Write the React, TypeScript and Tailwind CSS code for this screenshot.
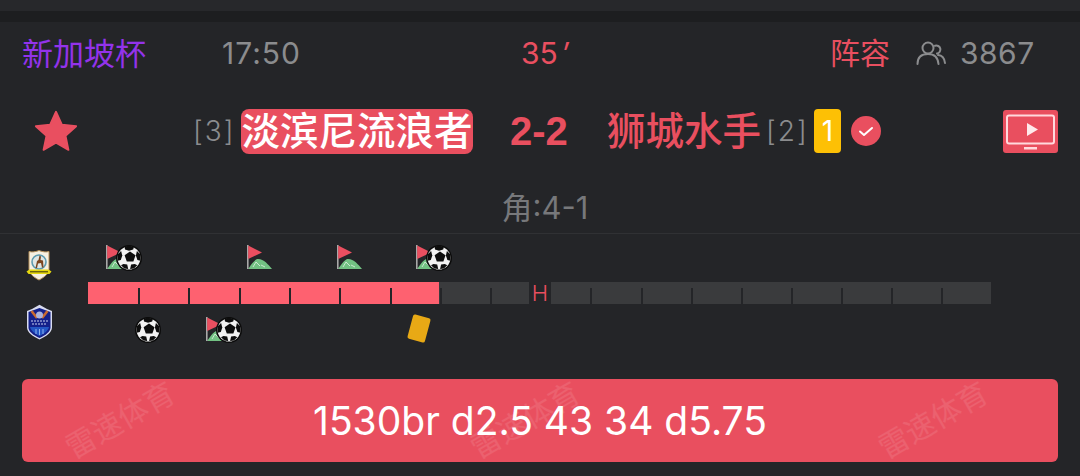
import React from "react";

const FONT = "font-['Inter','Noto_Sans_CJK_SC',sans-serif]";

function Ball({ className }: { className: string }) {
  return (
    <svg viewBox="0 0 26 26" className={className}>
      <circle cx="13" cy="13" r="13" fill="#0b0b0b" />
      <circle cx="13" cy="13" r="11.500" fill="#f2f2f2" />
      <path d="M14 6.500l5.500 3.800-2.100 6.300h-6.600l-2.200-6.300z" fill="#0d0d0d" />
      <path d="M8.500 1.600l4.500-.8 5 1-.8 2.600-4.200 1.400-4-1.400z" fill="#0d0d0d" />
      <path d="M1.500 9.500l3.600-3.400 1.200 4.400-1.500 4.500-3.200 .8z" fill="#0d0d0d" />
      <path d="M24.500 9.500l-3.600-3.400-1 4.400 1.500 4.500 3.100 .8z" fill="#0d0d0d" />
      <path d="M7.500 19l3.700 .5 1 4.500-3.800-.5-3.400-3.300z" fill="#0d0d0d" />
      <path d="M18.800 19l-3.700 .5-1 4.500 3.800-.5 3.400-3.300z" fill="#0d0d0d" />
    </svg>
  );
}

function Corner({ className }: { className: string }) {
  return (
    <svg viewBox="0 0 25 24" className={className}>
      <path d="M1 24c2-2 4-7 9-10 6-1 11 5 15 10z" fill="#72c283" />
      <path d="M9 17l-3 5M9 17l4 4M14 20l4 2" stroke="#dff3e3" strokeWidth="0.8" fill="none" />
      <rect x="0" y="0" width="1.600" height="24" fill="#a9a9a9" />
      <path d="M1.200 0.500L15 7.500 1.200 14z" fill="#ea4f60" />
    </svg>
  );
}

function CornerBall({ className }: { className: string }) {
  return (
    <div className={`absolute flex h-[25px] w-[36px] ${className}`}>
      <Corner className="h-[24px] w-[25px]" />
      <Ball className="-ml-[15px] h-[26px] w-[26px]" />
    </div>
  );
}

function HomeCrest() {
  return (
    <svg viewBox="0 0 26 31" className="h-[31px] w-[26px]">
      <path d="M3 1.500c3 .8 6 .5 10-1 4 1.500 7 1.800 10 1v18c0 4-5 8-10 10.500-5-2.500-10-6.500-10-10.500z" fill="#f6f0e2" stroke="#b7925a" strokeWidth="1" />
      <circle cx="13" cy="12" r="7" fill="#dfe6e4" stroke="#5d9bb0" strokeWidth="1.600" />
      <path d="M9.500 18l1.500-7 1.500-1 1-4.500 1.500 1-.5 3.500 2.500 .5 .5 7-1.500 0-1-4.500-3 .5-1 4.500z" fill="#7a4520" />
      <path d="M0.500 21.500l3-2h19l3 2-2 2.500H2.500z" fill="#e6d80f" />
      <path d="M4 21.800h18" stroke="#3a3510" strokeWidth="1" />
    </svg>
  );
}

function AwayCrest() {
  return (
    <svg viewBox="0 0 27 36" className="h-[36px] w-[27px]">
      <path d="M1 7l5-2L13.500 .8 21 5l5 2v16.500c0 5-6 9-12.500 12C7 32.500 1 28.500 1 23.500z" fill="#d9dcf0" />
      <path d="M2.500 8l11-4 11 4v15.500c0 4-5 8-11 10.500-6-2.500-11-6.500-11-10.500z" fill="#14208a" />
      <path d="M5.500 7l5.500 7M21.500 7l-5.500 7" stroke="#c9692f" strokeWidth="2.600" />
      <circle cx="13.500" cy="11" r="3.500" fill="#aab2dc" />
      <path d="M5 17h17M6 20h15" stroke="#c9cff0" strokeWidth="1.200" strokeDasharray="2 1" />
      <path d="M4 23h19c-1 4-5 7-9.500 9C9 30 5 27 4 23z" fill="#2456c4" />
      <path d="M10 25v5M13.500 25v6M17 25v5" stroke="#8fb2ee" strokeWidth="1" />
    </svg>
  );
}

function PeopleIcon() {
  return (
    <svg viewBox="0 0 30 26" className="h-[26px] w-[30px]" fill="none" stroke="#8b8c8e" strokeWidth="2" strokeLinecap="round">
      <circle cx="12" cy="8" r="5.500" />
      <path d="M1.500 24c0-6 3.500-10 10.500-10s10 4 10.500 10" />
      <path d="M19 5.800a4 4 0 1 1 2 7.700" />
      <path d="M22 15c4 .3 6.500 3.500 7 8" />
    </svg>
  );
}

// one stretch of the match bar, a notch on the right of each cell but the last
function Stretch({ widths, tone }: { widths: string[]; tone: string }) {
  return (
    <>
      {widths.map((w, i) => (
        <div key={i} className={`flex h-full items-end justify-end ${w} ${tone}`}>
          {i < widths.length - 1 && <div className="h-4 w-[2px] bg-[#242528]" />}
        </div>
      ))}
    </>
  );
}

const playedCells = ["w-[52px]", "w-[50px]", "w-[51px]", "w-[50px]", "w-[50px]", "w-[51px]", "w-[47px]"];
const firstHalfRest = ["w-[3px]", "w-[50px]", "w-[37px]"];
const secondHalf = ["w-[41px]", "w-[51px]", "w-[50px]", "w-[50px]", "w-[50px]", "w-[50px]", "w-[50px]", "w-[50px]", "w-[48px]"];

const watermarks = ["left-[38px]", "left-[443px]", "left-[851px]"];

export default function App() {
  return (
    <div className={`h-[476px] w-[1080px] overflow-hidden bg-[#242528] ${FONT}`}>
      <div className="h-[11px] bg-[#27282b]" />
      <div className="h-[11px] bg-[#1d1e20]" />

      <div className="flex h-[62px] items-center pl-[22px] leading-none">
        <div className="w-[200px] text-[31px] text-[#9333ea]">新加坡杯</div>
        <div className="w-[299px] text-[30px] tracking-[1px] text-[#8b8c8e]">17:50</div>
        <div className="w-[309px] text-[30px] text-[#e94f60]">35<span className="ml-1 italic">′</span></div>
        <div className="w-[86px] text-[30px] text-[#e94f60]">阵容</div>
        <PeopleIcon />
        <div className="ml-[14px] text-[30px] tracking-[0.5px] text-[#8b8c8e]">3867</div>
      </div>

      <div className="flex h-[94px] items-center pl-[34px]">
        <svg viewBox="0 0 24 24" className="h-[44px] w-[44px] text-[#e94f60]">
          <path fill="currentColor" stroke="currentColor" strokeWidth="1" strokeLinejoin="round" d="M12 1.500l3.200 7 7.800.9-5.800 5.200 1.600 7.700-6.800-3.900-6.800 3.900 1.600-7.700L1 9.400l7.800-.9z" />
        </svg>
        <div className="ml-[115px] w-[48px] text-[28px] font-light tracking-[2px] text-[#8b8c8e]">[3]</div>
        <div className="flex h-[45px] w-[232px] items-center justify-center rounded-[8px] bg-[#e94f5f] pt-[1px] text-[38.500px] font-medium text-white">淡滨尼流浪者</div>
        <div className="ml-[37px] w-[97px] font-['Liberation_Sans',sans-serif] text-[40px] font-bold text-[#e94f5f]">2-2</div>
        <div className="w-[159px] pt-[1px] text-[38.500px] font-medium text-[#e94f5f]">狮城水手</div>
        <div className="w-[48px] text-[28px] font-light tracking-[2px] text-[#8b8c8e]">[2]</div>
        <div className="flex h-[44px] w-[27px] items-center justify-center rounded-[4px] bg-[#fdc005] text-[28px] text-white">1</div>
        <svg viewBox="0 0 30 30" className="ml-[10px] h-[30px] w-[30px]">
          <circle cx="15" cy="15" r="15" fill="#e94f5f" />
          <path d="M9 15.500l4 3.500 8-7" fill="none" stroke="#fff" strokeWidth="2" strokeLinecap="round" strokeLinejoin="round" />
        </svg>
        <svg viewBox="0 0 55 43" className="ml-[122px] h-[43px] w-[55px]">
          <rect width="55" height="43" rx="3" fill="#e94f5f" />
          <rect x="4" y="5.500" width="47" height="28" rx="2" fill="none" stroke="#ffd9dd" strokeWidth="2" />
          <path d="M24 13l11 6.500-11 6.500z" fill="#ffe9eb" />
          <rect x="21" y="37" width="13" height="2.500" fill="#ffd9dd" />
        </svg>
      </div>

      <div className="flex h-[55px] items-center justify-center pl-[10px] pt-[5px] text-[31px] text-[#77787b]">角:4-1</div>

      <div className="flex h-[146px] border-t border-[#303134]">
        <div className="flex w-[88px] flex-col items-center pr-[10px] pt-[16px]">
          <HomeCrest />
          <div className="mt-[23px]"><AwayCrest /></div>
        </div>
        <div className="flex flex-col pt-[11px]">
          <div className="relative h-[25px] w-[903px]">
            <CornerBall className="left-[18px]" />
            <Corner className="absolute left-[159px] h-[24px] w-[25px]" />
            <Corner className="absolute left-[249px] h-[24px] w-[25px]" />
            <CornerBall className="left-[328px]" />
          </div>
          <div className="mt-[12px] flex h-[22px] w-[903px] items-center">
            <Stretch widths={playedCells} tone="bg-[#fe6170]" />
            <Stretch widths={firstHalfRest} tone="bg-[#3a3b3d]" />
            <div className="flex w-[22px] items-center justify-center text-[22px] font-light leading-none text-[#e94f5f]">H</div>
            <Stretch widths={secondHalf} tone="bg-[#3a3b3d]" />
          </div>
          <div className="relative mt-[13px] h-[26px] w-[903px]">
            <Ball className="absolute left-[47px] h-[26px] w-[26px]" />
            <CornerBall className="left-[118px]" />
            <div className="absolute left-[322px] -top-[1px] h-[25px] w-[18px] rotate-[15deg] rounded-[2px] bg-[#e8a915]" />
          </div>
        </div>
      </div>

      <div className="relative mx-[22px] flex h-[83px] items-center justify-center overflow-hidden rounded-[6px] bg-[#e94f5f] pt-[2px] text-[39px] font-normal text-white">
        1530br d2.5 43 34 d5.75
        {watermarks.map((left) => (
          <div key={left} className={`absolute top-[26px] -rotate-[30deg] text-[30px] leading-none text-white/10 ${left}`}>雷速体育</div>
        ))}
      </div>
    </div>
  );
}
